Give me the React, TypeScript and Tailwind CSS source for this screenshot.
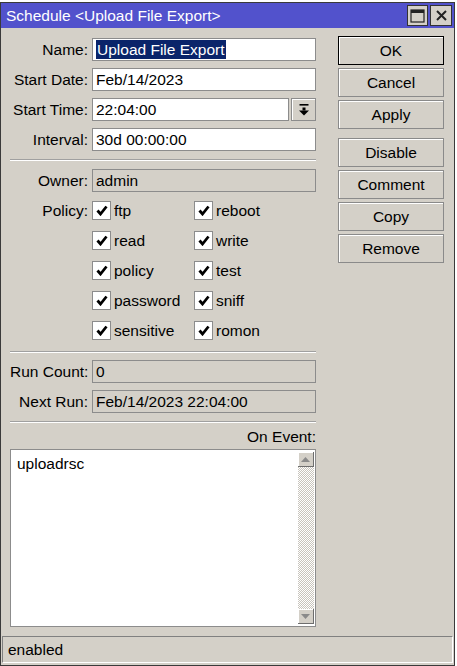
import type { ReactNode } from 'react'

const font = "font-['Liberation_Sans',Arial,sans-serif]"

function Label({ children }: { children: ReactNode }) {
  return <div className="w-[78px] shrink-0 whitespace-nowrap text-right">{children}</div>
}

function Input({ value, selected, disabled }: { value: string; selected?: boolean; disabled?: boolean }) {
  return (
    <div
      className={`flex h-[23px] flex-1 items-center whitespace-nowrap border border-[#8c8c8c] pl-[3px] ${disabled ? 'bg-[#d4d0c8]' : 'bg-white'}`}
    >
      <span className={selected ? 'bg-[#0a246a] px-[1px] leading-[19px] text-white' : ''}>{value}</span>
    </div>
  )
}

function Row({ label, children }: { label: string; children: ReactNode }) {
  return (
    <div className="flex h-[23px] items-center">
      <Label>{label}</Label>
      <div className="ml-[4px] flex flex-1">{children}</div>
    </div>
  )
}

function Separator({ className }: { className: string }) {
  return <div className={`h-[2px] border-t border-[#a0a0a0] border-b-white border-b ${className}`} />
}

function Check({ label }: { label: string }) {
  return (
    <div className="flex w-[102px] items-center">
      <div className="flex h-[19px] w-[19px] items-center justify-center border border-[#8c8c8c] bg-white">
        <svg width="12" height="11" viewBox="0 0 12 11">
          <path d="M1.5 5.5 L4.5 9 L10.5 1.5" fill="none" stroke="#000" strokeWidth="2.8" />
        </svg>
      </div>
      <span className="ml-[3px]">{label}</span>
    </div>
  )
}

function Button({ label, isDefault, className = '' }: { label: string; isDefault?: boolean; className?: string }) {
  return (
    <div
      className={`flex h-[29px] items-center justify-center border bg-[#d4d0c8] shadow-[inset_1px_1px_0_#fff] ${isDefault ? 'border-black' : 'border-[#8a8a8a]'} ${className}`}
    >
      {label}
    </div>
  )
}

const policies: [string, string][] = [
  ['ftp', 'reboot'],
  ['read', 'write'],
  ['policy', 'test'],
  ['password', 'sniff'],
  ['sensitive', 'romon'],
]

export default function App() {
  return (
    <div className={`h-[666px] w-[457px] bg-white pt-[2px] text-[15.5px] text-black ${font}`}>
      <div className="flex h-[664px] w-[455px] flex-col border border-[#3a3a3a] bg-[#d4d0c8]">
        {/* title bar */}
        <div className="flex h-[25px] items-center bg-[#5252cc] pl-[5px] pr-[2px]">
          <span className="flex-1 text-white">Schedule &lt;Upload File Export&gt;</span>
          <div className="flex h-[21px] w-[21px] items-center justify-center border border-[#333] bg-[#d4d0c8]">
            <svg width="15" height="14" viewBox="0 0 15 14">
              <rect x="1" y="1" width="13" height="12" fill="none" stroke="#222" strokeWidth="1.2" />
              <rect x="1" y="1" width="13" height="3" fill="#222" />
            </svg>
          </div>
          <div className="ml-[2px] flex h-[21px] w-[22px] items-center justify-center border border-[#333] bg-[#d4d0c8]">
            <svg width="11" height="11" viewBox="0 0 11 11">
              <path d="M1 1 L10 10 M10 1 L1 10" stroke="#222" strokeWidth="2" />
            </svg>
          </div>
        </div>

        {/* body */}
        <div className="flex flex-1 pl-[9px]">
          <div className="flex w-[306px] flex-col pt-[10px]">
            <Row label="Name:">
              <Input value="Upload File Export" selected />
            </Row>
            <div className="mt-[7px]">
              <Row label="Start Date:">
                <Input value="Feb/14/2023" />
              </Row>
            </div>
            <div className="mt-[7px]">
              <Row label="Start Time:">
                <Input value="22:04:00" />
                <div className="ml-[2px] flex h-[23px] w-[25px] items-center justify-center border border-[#8c8c8c] bg-[#d4d0c8] shadow-[inset_1px_1px_0_#fff]">
                  <svg width="10" height="12" viewBox="0 0 10 12">
                    <rect x="0.5" y="0" width="9" height="1.6" fill="#000" />
                    <rect x="3.5" y="3.5" width="3" height="3" fill="#000" />
                    <polygon points="0,6.5 10,6.5 5,11.5" fill="#000" />
                  </svg>
                </div>
              </Row>
            </div>
            <div className="mt-[7px]">
              <Row label="Interval:">
                <Input value="30d 00:00:00" />
              </Row>
            </div>

            <Separator className="mt-[8px]" />

            <div className="mt-[8px]">
              <Row label="Owner:">
                <Input value="admin" disabled />
              </Row>
            </div>

            <div className="mt-[7px] flex flex-col gap-[7px]">
              {policies.map(([a, b], i) => (
                <Row key={a} label={i === 0 ? 'Policy:' : ''}>
                  <Check label={a} />
                  <Check label={b} />
                </Row>
              ))}
            </div>

            <Separator className="mt-[9px]" />

            <div className="mt-[7px]">
              <Row label="Run Count:">
                <Input value="0" disabled />
              </Row>
            </div>
            <div className="mt-[7px]">
              <Row label="Next Run:">
                <Input value="Feb/14/2023 22:04:00" disabled />
              </Row>
            </div>

            <Separator className="mt-[8px]" />

            <div className="mt-[5px] h-[18px] text-right leading-[18px]">On Event:</div>

            <div className="mt-[3px] flex h-[178px] border border-[#8c8c8c] bg-white">
              <div className="flex-1 pl-[6px] pt-[2px]">uploadrsc</div>
              <div className="my-[2px] mr-[1px] flex w-[16px] flex-col bg-[repeating-conic-gradient(#c8c4bc_0_25%,#fff_0_50%)] bg-[length:2px_2px]">
                <div className="flex h-[15px] items-center justify-center border-b border-r border-[#6e6e6e] bg-[#d4d0c8] shadow-[inset_1px_1px_0_#fff]">
                  <svg width="9" height="5" viewBox="0 0 9 5">
                    <polygon points="0,5 9,5 4.5,0" fill="#8a8a8a" />
                  </svg>
                </div>
                <div className="flex-1" />
                <div className="flex h-[15px] items-center justify-center border-b border-r border-[#6e6e6e] bg-[#d4d0c8] shadow-[inset_1px_1px_0_#fff]">
                  <svg width="9" height="5" viewBox="0 0 9 5">
                    <polygon points="0,0 9,0 4.5,5" fill="#8a8a8a" />
                  </svg>
                </div>
              </div>
            </div>
          </div>

          <div className="ml-[22px] flex w-[106px] flex-col gap-[3px] pt-[8px]">
            <Button label="OK" isDefault />
            <Button label="Cancel" />
            <Button label="Apply" />
            <Button label="Disable" className="mt-[6px]" />
            <Button label="Comment" />
            <Button label="Copy" />
            <Button label="Remove" />
          </div>
        </div>

        {/* status bar */}
        <div className="mx-[1px] mb-[2px] flex h-[27px] items-center border border-b-white border-l-[#808080] border-r-white border-t-[#808080] pl-[5px]">
          enabled
        </div>
      </div>
    </div>
  )
}
